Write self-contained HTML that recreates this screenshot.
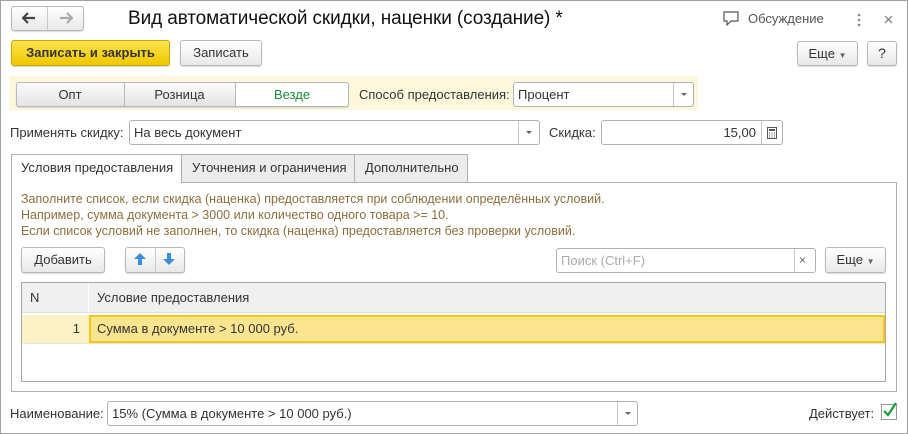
<!DOCTYPE html><html><head><meta charset="utf-8"><style>
*{box-sizing:border-box;margin:0;padding:0}
body{width:908px;height:434px;background:#fff;font-family:"Liberation Sans",sans-serif;font-size:13px;color:#333;position:relative;overflow:hidden}
.a{position:absolute}
.win{left:0;top:0;width:908px;height:434px;border:1px solid #a0a0a0}
.btn{position:absolute;border:1px solid #b8b8b8;border-radius:3px;background:linear-gradient(#fff,#e8e8e8);box-shadow:0 1px 1px rgba(0,0,0,.15);text-align:center;color:#333}
.fld{position:absolute;border:1px solid #b0b0b0;border-radius:3px;background:#fff;padding-left:4px;color:#333}
.sep{position:absolute;top:0;bottom:0;border-left:1px solid #c8c8c8}
.dd{position:absolute;width:0;height:0;border-left:3px solid transparent;border-right:3px solid transparent;border-top:3px solid #666}
.t{position:absolute;white-space:nowrap}
</style></head><body>
<div class="a win"></div>
<div class="btn" style="left:11px;top:6px;width:73px;height:25px"></div>
<div class="sep" style="left:47px;top:7px;height:23px;bottom:auto"></div>
<svg class="a" style="left:22px;top:12px" width="14" height="12"><path d="M1 6h12M6 1L1 6l5 5" fill="none" stroke="#444" stroke-width="2.2"/></svg>
<svg class="a" style="left:59px;top:12px" width="14" height="12"><path d="M1 6h12M8 1l5 5-5 5" fill="none" stroke="#aaa" stroke-width="2.2"/></svg>
<div class="t" style="left:128px;top:8px;font-size:19px;color:#111;letter-spacing:-0.1px">Вид автоматической скидки, наценки (создание) *</div>
<svg class="a" style="left:723px;top:11px" width="17" height="15"><path d="M1 1h14v9h-7l-4 4v-4H1z" fill="none" stroke="#555" stroke-width="1.2"/></svg>
<div class="t" style="left:748px;top:11px;color:#555">Обсуждение</div>
<svg class="a" style="left:857px;top:13px" width="4" height="14"><circle cx="2" cy="2" r="1.3" fill="#888"/><circle cx="2" cy="7" r="1.3" fill="#888"/><circle cx="2" cy="12" r="1.3" fill="#888"/></svg>
<svg class="a" style="left:884px;top:15px" width="9" height="9"><path d="M1 1l7 7M8 1L1 8" stroke="#777" stroke-width="1.2"/></svg>
<div class="btn" style="left:11px;top:40px;width:159px;height:26px;background:linear-gradient(#fbe34a,#f0c800);border-color:#c9a800;font-weight:bold;line-height:24px;color:#333">Записать и закрыть</div>
<div class="btn" style="left:180px;top:40px;width:82px;height:26px;line-height:24px">Записать</div>
<div class="btn" style="left:797px;top:41px;width:61px;height:25px;line-height:23px">Еще <span style="font-size:8px;color:#666">▼</span></div>
<div class="btn" style="left:867px;top:41px;width:30px;height:25px;line-height:23px;font-size:14px">?</div>
<div class="a" style="left:9px;top:76px;width:689px;height:34px;background:#fdf8dc"></div>
<div class="btn" style="left:16px;top:82px;width:333px;height:25px;background:linear-gradient(#fafafa,#e4e4e4)"></div>
<div class="a" style="left:235px;top:82px;width:114px;height:25px;background:#fff;border:1px solid #b8b8b8;border-radius:0 3px 3px 0"></div>
<div class="sep" style="left:124px;top:83px;height:23px;bottom:auto;border-color:#b8b8b8"></div>
<div class="t" style="left:16px;top:87px;width:108px;text-align:center">Опт</div>
<div class="t" style="left:124px;top:87px;width:111px;text-align:center">Розница</div>
<div class="t" style="left:235px;top:87px;width:114px;text-align:center;color:#1a8a3a">Везде</div>
<div class="t" style="left:359px;top:87px">Способ предоставления:</div>
<div class="fld" style="left:513px;top:82px;width:181px;height:25px;line-height:23px">Процент<div class="sep" style="left:159px"></div><div class="dd" style="left:167px;top:10px"></div></div>
<div class="t" style="left:10px;top:125px">Применять скидку:</div>
<div class="fld" style="left:129px;top:120px;width:411px;height:25px;line-height:23px">На весь документ<div class="sep" style="left:388px"></div><div class="dd" style="left:396px;top:10px"></div></div>
<div class="t" style="left:549px;top:125px">Скидка:</div>
<div class="fld" style="left:601px;top:120px;width:182px;height:25px;line-height:23px;text-align:right;padding-right:26px">15,00<div class="sep" style="left:159px"></div>
<svg class="a" style="left:165px;top:6px" width="10" height="12"><rect x=".5" y=".5" width="9" height="11" fill="none" stroke="#555"/><rect x="2" y="2" width="6" height="2" fill="#555"/><path d="M2 6h1M4.5 6h1M7 6h1M2 8h1M4.5 8h1M7 8h1M2 10h1M4.5 10h1M7 10h1" stroke="#555"/></svg></div>
<div class="a" style="left:11px;top:182px;width:886px;height:210px;border:1px solid #b0b0b0"></div>
<div class="a" style="left:181px;top:154px;width:174px;height:29px;background:#ececec;border:1px solid #b0b0b0"></div>
<div class="a" style="left:354px;top:154px;width:114px;height:29px;background:#ececec;border:1px solid #b0b0b0"></div>
<div class="a" style="left:11px;top:154px;width:171px;height:29px;background:#fff;border:1px solid #b0b0b0;border-bottom:none"></div>
<div class="t" style="left:21px;top:160px">Условия предоставления</div>
<div class="t" style="left:192px;top:160px">Уточнения и ограничения</div>
<div class="t" style="left:365px;top:160px">Дополнительно</div>
<div class="t" style="left:21px;top:191px;color:#8c6e3c;line-height:16px;font-size:12.5px">Заполните список, если скидка (наценка) предоставляется при соблюдении определённых условий.<br>Например, сумма документа &gt; 3000 или количество одного товара &gt;= 10.<br>Если список условий не заполнен, то скидка (наценка) предоставляется без проверки условий.</div>
<div class="btn" style="left:21px;top:247px;width:84px;height:26px;line-height:24px">Добавить</div>
<div class="btn" style="left:125px;top:247px;width:60px;height:26px"></div>
<div class="sep" style="left:155px;top:248px;height:24px;bottom:auto"></div>
<svg class="a" style="left:133px;top:252px" width="14" height="14"><path d="M7 1L1 7h4v6h4V7h4z" fill="#3a8fd8"/></svg>
<svg class="a" style="left:162px;top:252px" width="14" height="14"><path d="M7 13L1 7h4V1h4v6h4z" fill="#3a8fd8"/></svg>
<div class="fld" style="left:556px;top:248px;width:260px;height:25px;line-height:23px;color:#aaa">Поиск (Ctrl+F)<div class="sep" style="left:237px"></div><div class="t" style="left:242px;top:0;color:#666;font-size:12px">×</div></div>
<div class="btn" style="left:825px;top:247px;width:61px;height:26px;line-height:24px">Еще <span style="font-size:8px;color:#666">▼</span></div>
<div class="a" style="left:21px;top:282px;width:865px;height:100px;border:1px solid #a8a8a8"></div>
<div class="a" style="left:22px;top:283px;width:863px;height:30px;background:#f0f0f0;border-bottom:1px solid #ddd"></div>
<div class="a" style="left:88px;top:283px;height:30px;border-left:1px solid #fff"></div>
<div class="t" style="left:30px;top:290px">N</div>
<div class="t" style="left:97px;top:290px">Условие предоставления</div>
<div class="a" style="left:22px;top:315px;width:67px;height:28px;background:#fdf2c6"></div>
<div class="a" style="left:89px;top:315px;width:796px;height:28px;background:#fde48f;border:2px solid #f5c518"></div>
<div class="t" style="left:22px;top:321px;width:58px;text-align:right">1</div>
<div class="t" style="left:97px;top:321px">Сумма в документе &gt; 10 000 руб.</div>
<div class="a" style="left:22px;top:343px;width:863px;border-top:1px solid #e4e4e4"></div>
<div class="t" style="left:10px;top:406px">Наименование:</div>
<div class="fld" style="left:107px;top:401px;width:531px;height:25px;line-height:23px">15% (Сумма в документе &gt; 10 000 руб.)<div class="sep" style="left:509px"></div><div class="dd" style="left:517px;top:10px"></div></div>
<div class="t" style="left:809px;top:406px">Действует:</div>
<div class="a" style="left:881px;top:404px;width:16px;height:16px;border:1px solid #999;background:#fff"></div>
<svg class="a" style="left:881px;top:401px" width="17" height="18"><path d="M3 10l4 4 8-12" fill="none" stroke="#1a9a3a" stroke-width="2.2"/></svg>
</body></html>
